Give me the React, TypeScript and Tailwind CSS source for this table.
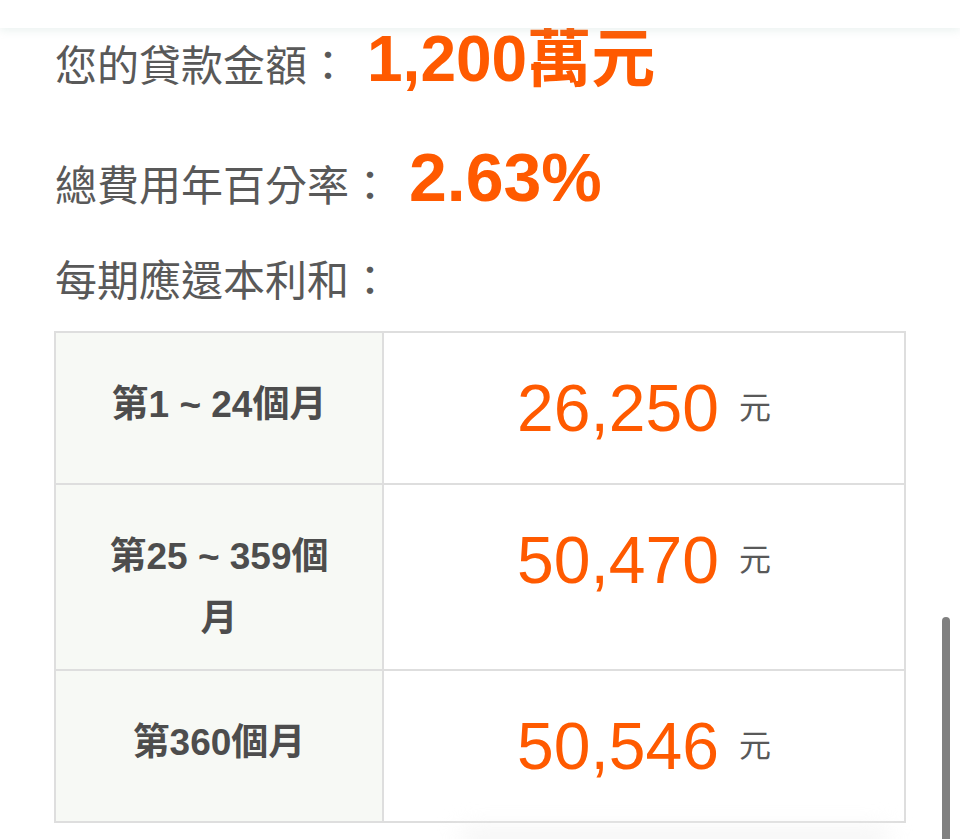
import React from 'react';

const rows = [
  { label: '第1 ~ 24個月', amount: '26,250' },
  { label: '第25 ~ 359個月', amount: '50,470' },
  { label: '第360個月', amount: '50,546' },
];

const font = '"Liberation Sans", "Noto Sans CJK TC", sans-serif';

const App: React.FC = () => {
  return (
    <div className="relative h-[839px] overflow-hidden bg-white" style={{ fontFamily: font }}>
      {/* top bar shadow */}
      <div className="absolute inset-x-0 top-0 z-10 h-[28px] bg-white shadow-[0_3px_8px_rgba(150,190,175,0.18)]" />

      <div className="pl-[55px] pt-[27px]">
        <div className="flex h-[60px] items-baseline">
          <span className="text-[42px] leading-none text-[#595959]">您的貸款金額：</span>
          <span className="ml-[18px] text-[64px] font-bold leading-none text-[#ff5a00]">1,200萬元</span>
        </div>

        <div className="mt-[56px] flex h-[60px] items-baseline">
          <span className="text-[42px] leading-none text-[#595959]">總費用年百分率：</span>
          <span className="ml-[18px] text-[68px] font-bold leading-none text-[#ff5a00]">2.63%</span>
        </div>

        <div className="mt-[58px] text-[42px] leading-none text-[#595959]">每期應還本利和：</div>
      </div>

      <div className="ml-[54px] mt-[28px] w-[852px] border-2 border-[#dedede]">
        {rows.map((row, i) => (
          <div key={i} className={`flex ${i > 0 ? 'border-t-2 border-[#dedede]' : ''}`}>
            <div className="w-[328px] shrink-0 border-r-2 border-[#dedede] bg-[#f7f9f5] px-[42px] pb-[19px] pt-[41px] text-center text-[37px] font-bold leading-[62px] text-[#4d4d4d]">
              {row.label}
            </div>
            <div className="flex flex-1 items-start justify-center pb-[27px] pt-[27px]">
              <div className="flex h-[96px] items-center">
                <span className="text-[66px] text-[#ff5a00]">{row.amount}</span>
                <span className="ml-[20px] text-[32px] text-[#595959]">元</span>
              </div>
            </div>
          </div>
        ))}
      </div>

      {/* faint shadow from the element below */}
      <div className="absolute -bottom-[6px] left-[460px] right-[70px] h-[14px] rounded-full bg-[#efefef] blur-md" />

      {/* overlay scrollbar */}
      <div className="absolute bottom-0 right-[10px] top-[617px] w-[8px] rounded-t-full bg-[#808080]" />
    </div>
  );
};

export default App;
